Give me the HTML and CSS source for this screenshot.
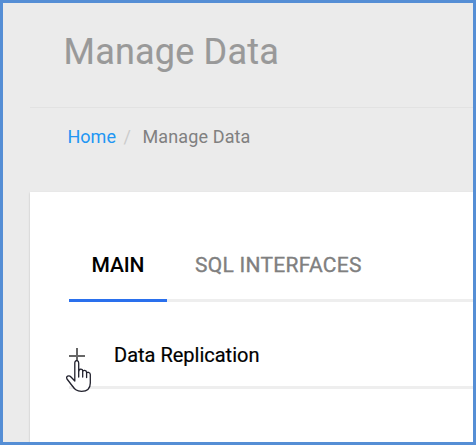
FILE: index.html
```html
<!DOCTYPE html>
<html lang="en">
<head>
<meta charset="utf-8">
<title>Manage Data</title>
<link rel="stylesheet" href="styles.css">
</head>
<body>
<div class="page">
  <header class="header"><h1 class="title"><span>Manage Data</span></h1></header>
  <nav class="breadcrumb">
    <a class="home" href="#">Home</a><span class="separator">/</span><span class="current">Manage Data</span>
  </nav>
  <main class="panel">
    <div class="tabs">
      <div class="tab active"><span>MAIN</span></div>
      <div class="tab sql"><span>SQL INTERFACES</span></div>
    </div>
    <div class="row">
      <svg class="plus" width="16" height="16" viewBox="0 0 16 16"><path d="M8 0V15M0 8H16" stroke="#666" stroke-width="2"/></svg>
      <span class="label">Data Replication</span>
      <svg class="pointer" width="26" height="34" viewBox="0 0 26 34"><path d="M8.8 21V3C8.8-.2 12.7-.2 12.7 3V12C12.7 8.3 16.7 8.3 16.7 11V12C16.7 9.5 20.6 9.8 20.6 12.5V13.5C20.6 11.5 24.3 12 24.3 14.5V23C24.3 28 22 31.3 15.5 31.3C10.5 31.3 8.5 29 6 25.5L1 19C-.5 16.3 3 14.8 5 17L8.8 21M12.7 11V17M16.7 11.5V17M20.6 12.5V17.5" fill="#fff" stroke="#20202c" stroke-width="1.3" stroke-linejoin="round" stroke-linecap="round"/></svg>
    </div>
  </main>
</div>
</body>
</html>
```
FILE: styles.css
```css
* { box-sizing: border-box; }
body { margin: 0; font-family: Roboto, sans-serif; }
.page {
  width: 476px; height: 445px; border: 3px solid #558ed5;
  padding-left: 27px; background: #ebebeb; overflow: hidden;
  display: flex; flex-direction: column;
}
.header { height: 105px; border-bottom: 1px solid #e2e2e2; padding: 28px 0 0 33.5px; }
.title { margin: 0; font-size: 36px; line-height: 42px; font-weight: 400; color: #999; letter-spacing: .2px; -webkit-text-stroke: .15px #999; }
.breadcrumb { height: 84px; padding: 18px 0 0 37.5px; font-size: 18px; line-height: 22px; color: #808080; white-space: nowrap; display: flex; }
.home { color: #2196f3; text-decoration: none; width: 56px; }
.separator { color: #ccc; width: 19px; }
.current { letter-spacing: .12px; }
.panel { flex: 1; background: #fff; padding: 52px 0 0 39px; box-shadow: 0 1px 2px rgba(0,0,0,.2); }
.tabs { display: flex; height: 58px; border-bottom: 3px solid #eee; }
.tab { height: 58px; padding-top: 9px; font-size: 21px; line-height: 24px; font-weight: 500; color: #808080; white-space: nowrap; }
.active { width: 98px; padding-left: 22.5px; color: #000; letter-spacing: -.15px; border-bottom: 3px solid #2a70ed; }
.sql { padding-left: 28px; font-weight: 400; letter-spacing: .28px; -webkit-text-stroke: .35px #808080; }
.row { position: relative; height: 87px; border-bottom: 3px solid #eee; display: flex; padding-top: 41px; }
.plus { margin-top: 5px; }
.label { margin-left: 29px; font-size: 20px; line-height: 24px; font-weight: 400; -webkit-text-stroke: .2px #000; color: #000; white-space: nowrap; }
.pointer { position: absolute; left: -3px; top: 58px; }
```
